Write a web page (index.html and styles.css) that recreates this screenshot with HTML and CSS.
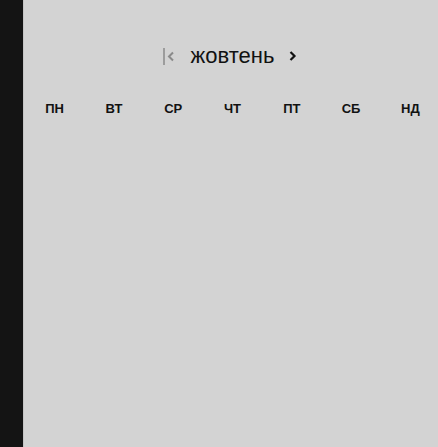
FILE: index.html
```html
<!DOCTYPE html>
<html lang="uk">
<head>
<meta charset="utf-8">
<link rel="stylesheet" href="styles.css">
</head>
<body>
<div class="app">
  <aside class="sidebar"></aside>
  <main class="calendar">
    <div class="cal-header">
      <button class="nav nav-first" aria-label="first">
        <svg width="14" height="20" viewBox="0 0 14 20"><line x1="1" y1="2" x2="1" y2="19" stroke="#8a8a8a" stroke-width="1.5"/><polyline points="10,6.5 6,10.5 10,14.5" fill="none" stroke="#8a8a8a" stroke-width="2"/></svg>
      </button>
      <span class="month">жовтень</span>
      <button class="nav nav-next" aria-label="next">
        <svg width="12" height="20" viewBox="0 0 12 20"><polyline points="3.5,6 7.5,10 3.5,14" fill="none" stroke="#111" stroke-width="2.2"/></svg>
      </button>
    </div>
    <div class="weekdays">
      <span>ПН</span><span>ВТ</span><span>СР</span><span>ЧТ</span><span>ПТ</span><span>СБ</span><span>НД</span>
    </div>
  </main>
</div>
</body>
</html>
```
FILE: styles.css
```css
html, body {
  margin: 0;
  padding: 0;
  height: 100%;
}
body {
  font-family: "Liberation Sans", Arial, sans-serif;
  background: #d3d3d3;
  overflow: hidden;
}
.app {
  display: flex;
  height: 447px;
}
.sidebar {
  width: 23px;
  flex: none;
  background: #141414;
  border-right: 1px solid #c4c4c4;
}
.calendar {
  flex: 1;
  background: #d3d3d3;
  padding-top: 42px;
}
.cal-header {
  display: flex;
  align-items: center;
  justify-content: center;
  height: 28px;
}
.nav {
  background: none;
  border: 0;
  padding: 0;
  display: flex;
  align-items: center;
  cursor: pointer;
}
.nav-first {
  margin-right: 14px;
}
.nav-next {
  margin-left: 13px;
}
.month {
  font-size: 22px;
  color: #111;
  line-height: 28px;
}
.weekdays {
  display: grid;
  grid-template-columns: repeat(7, 1fr);
  margin-top: 31px;
  margin-right: -2px;
  padding-left: 1px;
}
.weekdays span {
  text-align: center;
  font-size: 13px;
  font-weight: bold;
  color: #111;
  line-height: 16px;
}
```
